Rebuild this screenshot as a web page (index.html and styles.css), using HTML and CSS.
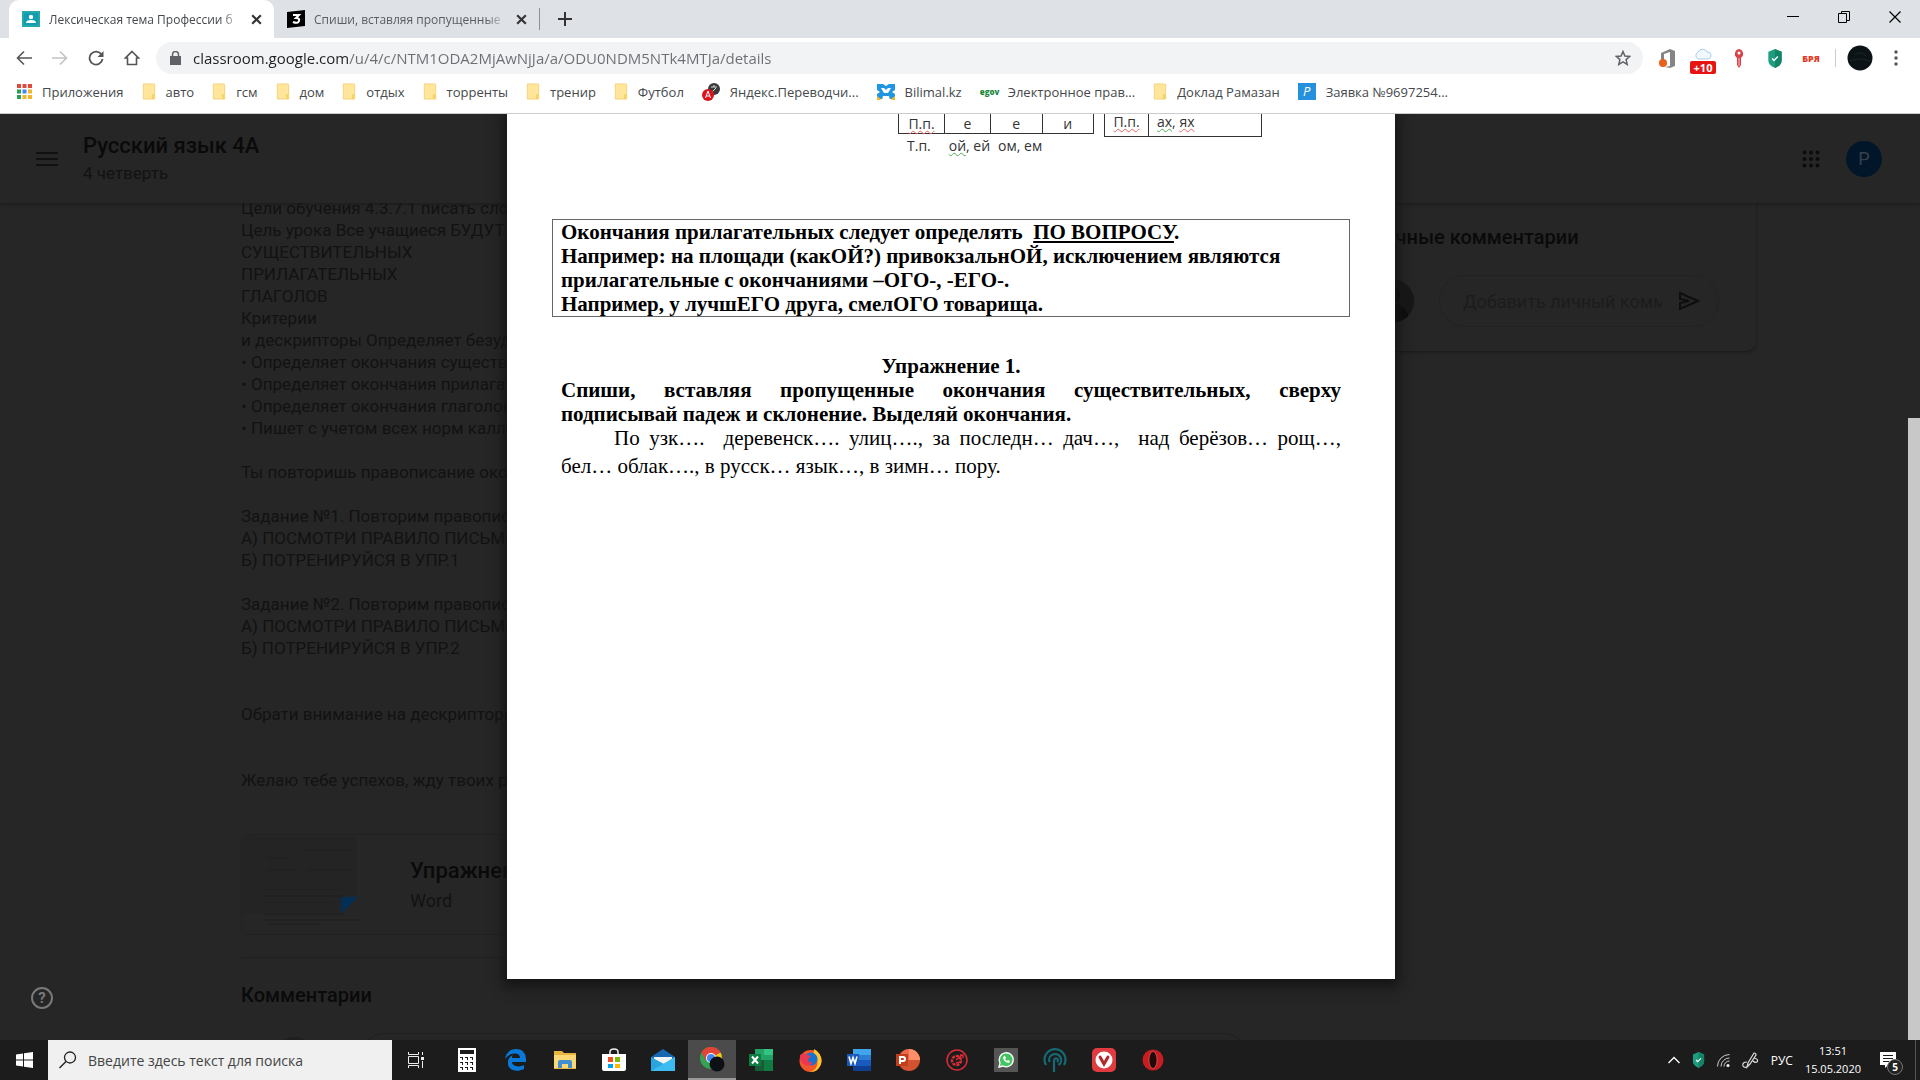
FILE: index.html
```html
<!DOCTYPE html>
<html lang="ru">
<head>
    <meta charset="UTF-8">
    <meta name="viewport" content="width=device-width, initial-scale=1.0">
    <title>Лексическая тема Профессии</title>
    <link rel="stylesheet" href="styles.css">
</head>
<body>
    <svg class="defs" width="0" height="0">
        <symbol id="folder" viewBox="0 0 14 18">
            <path d="M1 1h11a1 1 0 0 1 1 1v15H1z" fill="#ffe69a" stroke="#f2d27a"/>
            <path d="M10 17v-4q0-1 1-1h2v5z" fill="#f5d365"/>
        </symbol>
        <symbol id="shield" viewBox="0 0 16 20">
            <path d="M8 0l7 3v9q0 5-7 8-7-3-7-8V3z" fill="#1f9d80"/>
            <path d="M8 0l7 3v9q0 5-7 8z" fill="#148468"/>
            <path d="M5 10l2 2 4-4" fill="none" stroke="#fff" stroke-width="1.5"/>
        </symbol>
        <symbol id="close" viewBox="0 0 12 12">
            <path d="M2 2l8 8M10 2l-8 8" fill="none" stroke="currentColor" stroke-width="2"/>
        </symbol>
    </svg>

    <!-- browser tabs -->
    <div class="tabs">
        <div class="tab active">
            <svg width="18" height="16" viewBox="0 0 18 16"><path d="M0 0h18v16H0z" fill="#25a8a8"/><path d="M2 2h14v12H2z" fill="#129eaf"/><circle cx="9" cy="6" r="2.200" fill="#fff"/><path d="M4 12q0-3 5-3t5 3z" fill="#fff"/></svg>
            <span class="tab-title">Лексическая тема Профессии б</span>
            <button aria-label="Закрыть"><svg width="13" height="13"><use href="#close"/></svg></button>
        </div>
        <div class="tab">
            <svg width="18" height="18" viewBox="0 0 18 18"><path d="M0 2l18-2v16L0 18z" fill="#000"/><path d="M6 5h6l-3 3q4 0 3 3-1 3-6 1" fill="none" stroke="#fff" stroke-width="2"/></svg>
            <span class="tab-title">Спиши, вставляя пропущенные</span>
            <button aria-label="Закрыть"><svg width="13" height="13"><use href="#close"/></svg></button>
        </div>
        <button class="new-tab" aria-label="Новая вкладка"><svg width="14" height="14" viewBox="0 0 14 14"><path d="M7 0v14M0 7h14" stroke="#333" stroke-width="2"/></svg></button>
        <div class="window-buttons">
            <button aria-label="Свернуть"><svg width="12" height="14" viewBox="0 0 12 14"><path d="M0 6.500h12" stroke="#000"/></svg></button>
            <button aria-label="Развернуть"><svg width="12" height="12" viewBox="0 0 12 12"><path d="M.5 2.500h8v9h-8zM3.500 2V.5h8v9H9" fill="none" stroke="#000"/></svg></button>
            <button aria-label="Закрыть окно"><svg width="12" height="12" viewBox="0 0 12 12"><path d="M.5.5l11 11M11.500.5l-11 11" stroke="#000" stroke-width="1.200"/></svg></button>
        </div>
    </div>

    <!-- address bar -->
    <div class="toolbar">
        <button aria-label="Назад"><svg width="16" height="16" viewBox="0 0 16 16"><path d="M16 8H2M8 1.500L1.500 8 8 14.500" fill="none" stroke="#555" stroke-width="1.600"/></svg></button>
        <button aria-label="Вперёд"><svg width="16" height="16" viewBox="0 0 16 16"><path d="M0 8h14M8 1.500L14.500 8 8 14.500" fill="none" stroke="#c0c2c4" stroke-width="1.600"/></svg></button>
        <button aria-label="Обновить"><svg width="16" height="16" viewBox="0 0 16 16"><path d="M13.500 4.500A6.500 6.500 0 1 0 14.500 9" fill="none" stroke="#555" stroke-width="1.800"/><path d="M15.500 1v6h-6z" fill="#555"/></svg></button>
        <button aria-label="Домой"><svg width="16" height="16" viewBox="0 0 16 16"><path d="M8 1.500L14.500 8H12.500v6.500h-9V8h-2z" fill="none" stroke="#555" stroke-width="1.600"/></svg></button>
        <div class="address">
            <svg width="11" height="14" viewBox="0 0 11 14"><path d="M0 5h11v9H0z" fill="#5f6368"/><path d="M2.500 6V3.500a3 3 0 0 1 6 0V6" fill="none" stroke="#5f6368" stroke-width="1.500"/></svg>
            <input type="text" aria-label="Адрес" value="classroom.google.com/u/4/c/NTM1ODA2MjAwNjJa/a/ODU0NDM5NTk4MTJa/details">
            <button aria-label="Добавить в закладки"><svg width="16" height="16" viewBox="0 0 16 16"><path d="M8 1.500l1.900 4.500 4.800.4-3.600 3.200 1.100 4.800L8 11.900l-4.200 2.500 1.100-4.800L1.300 6.400 6.100 6z" fill="none" stroke="#5f6368" stroke-width="1.500"/></svg></button>
        </div>
        <div class="extensions">
            <button aria-label="Office"><svg width="18" height="19" viewBox="0 0 18 19"><path d="M3 4l9-4 5 2v15l-5 2-5-1 5-1V3L6 5v6H3z" fill="#858585"/><circle cx="5" cy="14" r="4" fill="#e8611a"/></svg></button>
            <button class="weather" aria-label="Погода"><svg width="20" height="12" viewBox="0 0 20 12"><path d="M5 11a4 4 0 0 1 0-7 5 5 0 0 1 9 0 3.500 3.500 0 0 1 1 7z" fill="#f2f9fe" stroke="#a8cde8"/></svg><span class="badge">+10</span></button>
            <button aria-label="Пароли"><svg width="12" height="19" viewBox="0 0 12 19"><path d="M6 0a5 5 0 0 1 2 9v7l-2 3-2-3V9a5 5 0 0 1 2-9z" fill="#d8424b"/><circle cx="6" cy="4" r="1.500" fill="#fff"/><path d="M6 9v8" stroke="#fbb"/></svg></button>
            <button aria-label="Защита"><svg width="16" height="19"><use href="#shield"/></svg></button>
            <button class="bra" aria-label="БРЯ">БРЯ</button>
            <span class="line"></span>
            <button aria-label="Профиль"><svg width="26" height="26" viewBox="0 0 26 26"><circle cx="13" cy="13" r="12.500" fill="#0c1317"/><path d="M3 16q10-4 20 0M7 10q6-5 12 1" stroke="#1b2429" fill="none"/></svg></button>
            <button aria-label="Меню"><svg width="4" height="16" viewBox="0 0 4 16" fill="#555"><circle cx="2" cy="2" r="1.700"/><circle cx="2" cy="8" r="1.700"/><circle cx="2" cy="14" r="1.700"/></svg></button>
        </div>
    </div>

    <!-- bookmarks -->
    <nav class="bookmarks">
        <a href="#"><svg width="15" height="15" viewBox="0 0 15 15"><path d="M0 0h4v4H0zM5.500 0h4v4h-4zM11 0h4v4h-4z" fill="#df4a3c"/><path d="M0 5.500h4v4H0z" fill="#2a9d57"/><path d="M5.500 5.500h4v4h-4z" fill="#4285f4"/><path d="M11 5.500h4v4h-4zM5.500 11h4v4h-4zM11 11h4v4h-4z" fill="#f2b42a"/><path d="M0 11h4v4H0z" fill="#2a9d57"/></svg>Приложения</a>
        <a href="#"><svg width="14" height="17"><use href="#folder"/></svg>авто</a>
        <a href="#"><svg width="14" height="17"><use href="#folder"/></svg>гсм</a>
        <a href="#"><svg width="14" height="17"><use href="#folder"/></svg>дом</a>
        <a href="#"><svg width="14" height="17"><use href="#folder"/></svg>отдых</a>
        <a href="#"><svg width="14" height="17"><use href="#folder"/></svg>торренты</a>
        <a href="#"><svg width="14" height="17"><use href="#folder"/></svg>тренир</a>
        <a href="#"><svg width="14" height="17"><use href="#folder"/></svg>Футбол</a>
        <a href="#"><svg width="18" height="18" viewBox="0 0 18 18"><circle cx="12" cy="6" r="6" fill="#3a3a3a"/><path d="M9 4h6M12 2v2M10 9l4-4" stroke="#ddd"/><circle cx="6" cy="12" r="6" fill="#d9141e"/><path d="M3.500 15L6 8l2.500 7M4.500 13h3" stroke="#fff" fill="none"/></svg>Яндекс.Переводчи...</a>
        <a href="#"><svg width="18" height="16" viewBox="0 0 18 16"><path d="M0 0h6l3 2 3-2h6v6l-3 2 3 2v5H0v-5l3-2-3-2z" fill="#2196e3"/><path d="M4 4h3l2 2 2-2h3l-3 5H7zM6 12h6l1 4H5z" fill="#fff"/><path d="M0 12l4 3-1 1H0zM18 12l-4 3 1 1h3z" fill="#f6b52a"/></svg>Bilimal.kz</a>
        <a href="#"><span class="egov">egov</span>Электронное прав...</a>
        <a href="#"><svg width="14" height="17"><use href="#folder"/></svg>Доклад Рамазан</a>
        <a href="#"><span class="p-icon">P</span>Заявка №9697254...</a>
    </nav>

    <!-- page under the viewer -->
    <div class="page">
        <header class="course">
            <button aria-label="Главное меню"><svg width="22" height="14" viewBox="0 0 22 14"><path d="M0 1h22M0 7h22M0 13h22" stroke="#111" stroke-width="2"/></svg></button>
            <div class="course-name">
                <h1>Русский язык 4А</h1>
                <p>4 четверть</p>
            </div>
            <button class="apps" aria-label="Приложения Google"><svg width="18" height="18" viewBox="0 0 18 18" fill="#0c0c0c"><circle cx="2.500" cy="2.500" r="2"/><circle cx="9" cy="2.500" r="2"/><circle cx="15.500" cy="2.500" r="2"/><circle cx="2.500" cy="9" r="2"/><circle cx="9" cy="9" r="2"/><circle cx="15.500" cy="9" r="2"/><circle cx="2.500" cy="15.500" r="2"/><circle cx="9" cy="15.500" r="2"/><circle cx="15.500" cy="15.500" r="2"/></svg></button>
            <button class="account" aria-label="Аккаунт">P</button>
        </header>

        <div class="content">
            <main class="task">
                <p class="description">Цели обучения 4.3.7.1 писать слова
Цель урока Все учащиеся БУДУТ
СУЩЕСТВИТЕЛЬНЫХ
ПРИЛАГАТЕЛЬНЫХ
ГЛАГОЛОВ
Критерии
и дескрипторы Определяет безударные
• Определяет окончания существительных
• Определяет окончания прилагательных
• Определяет окончания глаголов
• Пишет с учетом всех норм каллиграфии

Ты повторишь правописание окончаний

Задание №1. Повторим правописание
А) ПОСМОТРИ ПРАВИЛО ПИСЬМА
Б) ПОТРЕНИРУЙСЯ В УПР.1

Задание №2. Повторим правописание
А) ПОСМОТРИ ПРАВИЛО ПИСЬМА
Б) ПОТРЕНИРУЙСЯ В УПР.2


Обрати внимание на дескрипторы


Желаю тебе успехов, жду твоих работ</p>
                <a class="attachment" href="#">
                    <svg width="127" height="98" viewBox="0 0 127 98">
                        <path d="M0 0h116v61l-17 17H0z" fill="#242424"/>
                        <path d="M116 0v61" stroke="#2b2b2b"/>
                        <path d="M26 22h20M64 14h46M26 34h30M66 34h42M22 54h80M22 60h78M22 66h70M22 78h80M22 84h100M28 88h50" stroke="#1e1e1e"/>
                        <path d="M99 61h17L99 78z" fill="#032f55"/>
                    </svg>
                    <span>
                        <strong>Упражнение</strong>
                        <small>Word</small>
                    </span>
                </a>
                <h2>Комментарии</h2>
                <div class="comment"><span class="avatar"></span><span class="comment-line"></span></div>
            </main>

            <aside class="private">
                <h2>Личные комментарии</h2>
                <div class="private-row">
                    <svg width="44" height="44" viewBox="0 0 44 44"><circle cx="22" cy="22" r="22" fill="#171717"/><circle cx="22" cy="16" r="8" fill="#0c0c0c"/><path d="M6 37q2-12 16-12t16 12q-16 14-32 0" fill="#0c0c0c"/></svg>
                    <div class="pill">
                        <input type="text" aria-label="Личный комментарий" placeholder="Добавить личный комментарий">
                        <button aria-label="Отправить"><svg width="22" height="20" viewBox="0 0 22 20"><path d="M2 2l18 8-18 8v-6l9-2-9-2z" fill="none" stroke="#0e0e0e" stroke-width="2"/></svg></button>
                    </div>
                </div>
            </aside>
        </div>

        <button class="help" aria-label="Справка">?</button>

        <!-- document viewer -->
        <article class="document">
            <div class="endings">
                <div>
                    <table class="single">
                        <tr><td><span class="red">П.п.</span></td><td>е</td><td>е</td><td>и</td></tr>
                    </table>
                    <p class="instrumental"><span>Т.п.</span><span><span class="green">ой</span>, ей</span><span>ом, ем</span></p>
                </div>
                <table class="plural">
                    <tr><td><span class="red">П.п.</span></td><td><span class="green">ах</span>, <span class="red">ях</span></td></tr>
                </table>
            </div>
            <div class="rule">
                Окончания прилагательных следует определять&nbsp; <u>ПО ВОПРОСУ</u>.<br>
                Например: на площади (какОЙ?) привокзальнОЙ, исключением являются<br>
                прилагательные с окончаниями –ОГО-, -ЕГО-.<br>
                Например, у лучшЕГО друга, смелОГО товарища.
            </div>
            <div class="exercise">
                <h3>Упражнение 1.</h3>
                <p class="instruction">Спиши, вставляя пропущенные окончания существительных, сверху подписывай&nbsp;падеж и склонение. Выделяй окончания.</p>
                <p class="words">По узк…. &nbsp;деревенск…. улиц…., за последн… дач…, &nbsp;над берёзов… рощ…, бел…&nbsp;облак…., в русск… язык…, в зимн… пору.</p>
            </div>
        </article>
        <div class="scrollbar"></div>
    </div>

    <!-- windows taskbar -->
    <footer class="taskbar">
        <button class="start" aria-label="Пуск"><svg width="17" height="16" viewBox="0 0 17 16" fill="#fff"><path d="M0 2.500L7 1.500V7.500H0zM8 1.300L17 0v7.500H8zM0 8.500h7v6l-7-1zM8 8.500h9V16l-9-1.300z"/></svg></button>
        <label class="search">
            <svg width="18" height="18" viewBox="0 0 18 18"><circle cx="11" cy="6.500" r="5.500" fill="none" stroke="#222" stroke-width="1.300"/><path d="M7 10.500L.5 17" stroke="#222" stroke-width="1.500"/></svg>
            <input type="text" aria-label="Поиск" placeholder="Введите здесь текст для поиска">
        </label>
        <div class="task-icons">
            <button aria-label="Представление задач"><svg width="16" height="16" viewBox="0 0 16 16" fill="none" stroke="#eee"><path d="M.5 0v2.500h10V0M.5 16v-2.500h10V16M.5 4.500h10v7H.5zM14.500 0v3M14.500 9v7"/><path d="M13 5h3v3h-3z" fill="#eee" stroke="none"/></svg></button>
            <button aria-label="Калькулятор"><svg width="18" height="24" viewBox="0 0 18 24"><path d="M0 0h18v24H0z" fill="#fff"/><path d="M2 2h14v4H2zM2 9h3v3H2zM7 9h3v3H7zM12 9h3v3h-3zM2 14h3v3H2zM7 14h3v3H7zM12 14h3v3h-3zM2 19h3v3H2zM7 19h3v3H7zM12 19h3v3h-3z" fill="#1c1c1c"/><path d="M2 10h2v2H2zM7 10h2v2H7zM12 10h2v2h-2zM2 15h2v2H2zM7 15h2v2H7zM12 15h2v2h-2zM2 20h2v2H2zM7 20h2v2H7zM12 20h2v2h-2z" fill="#fff"/></svg></button>
            <button aria-label="Edge"><svg width="22" height="22" viewBox="0 0 22 22"><path d="M0 10C1 3 6 0 11 0c7 0 10 5 10 10v3H7c0 4 7 6 12 3v4C11 24 2 21 3 13c0-4 3-6 5-7-1 1-1 2-1 3h8c0-6-10-6-15 1z" fill="#0a78d6"/></svg></button>
            <button aria-label="Проводник"><svg width="22" height="20" viewBox="0 0 22 20"><path d="M0 1h8l2 2h12v16H0z" fill="#e8b43e"/><path d="M0 5h22v13H0z" fill="#fbd775"/><path d="M4 18v-6q0-2 2-2h10q2 0 2 2v6h-4v-4H8v4z" fill="#3f8fd0"/></svg></button>
            <button aria-label="Магазин"><svg width="24" height="24" viewBox="0 0 24 24"><path d="M8 6V4q0-3 4-3t4 3v2" fill="none" stroke="#eee" stroke-width="1.500"/><path d="M0 6h24v15q0 2-2 2H2q-2 0-2-2z" fill="#fff"/><path d="M6 9h5v5H6z" fill="#f04e23"/><path d="M13 9h5v5h-5z" fill="#7fb900"/><path d="M6 16h5v4H6z" fill="#00a3ee"/><path d="M13 16h5v4h-5z" fill="#ffb800"/></svg></button>
            <button aria-label="Почта"><svg width="24" height="22" viewBox="0 0 24 22"><path d="M0 8l12-8 12 8v4H0z" fill="#1768b3"/><path d="M3 8h18v8H3z" fill="#f4f4f4"/><path d="M0 8l13 7 11-7v14H0z" fill="#2aa5e0"/><path d="M24 8v14H0z" fill="#3dbcf0"/></svg></button>
            <button class="current" aria-label="Chrome"><svg width="25" height="25" viewBox="0 0 25 25"><circle cx="11" cy="11" r="11" fill="#34a353"/><path d="M1.500 5.500A11 11 0 0 1 20.500 5.500L11 11z" fill="#e24436"/><path d="M20.500 5.500A11 11 0 0 1 11 22V11z" fill="#fbc417"/><path d="M1.500 5.500A11 11 0 0 1 20.500 6H11l-5 8z" fill="#e24436"/><circle cx="11" cy="11" r="5" fill="#fff"/><circle cx="11" cy="11" r="4" fill="#4285f4"/><circle cx="17" cy="17" r="7.500" fill="#0d1115"/></svg></button>
            <button aria-label="Excel"><svg width="24" height="22" viewBox="0 0 24 22"><path d="M6 0h9v11H6z" fill="#21a366"/><path d="M15 0h9v6h-9z" fill="#33c481"/><path d="M15 6h9v5h-9z" fill="#21a366"/><path d="M6 11h9v11H6z" fill="#185c37"/><path d="M15 11h9v11h-9z" fill="#107c41"/><path d="M0 5h12v12H0z" fill="#107c41"/><path d="M3 7.500l6 7M9 7.500l-6 7" stroke="#fff" stroke-width="2"/></svg></button>
            <button aria-label="Firefox"><svg width="23" height="23" viewBox="0 0 23 23"><circle cx="11.500" cy="12" r="11" fill="#f4562c"/><path d="M15 0q8 4 7.500 13-2 10-12 10 8-2 8-10 0-5-4-8z" fill="#ffc62b"/><circle cx="12" cy="10" r="6.500" fill="#1a72d0"/><path d="M1 6q4-3 7 0l4 1-3 3q0 4 5 3-3 5-8 3-6-3-5-10z" fill="#ec3750"/></svg></button>
            <button aria-label="Word"><svg width="24" height="22" viewBox="0 0 24 22"><path d="M6 0h18v6H6z" fill="#41a5ee"/><path d="M6 6h18v5H6z" fill="#2b7cd3"/><path d="M6 11h18v6H6z" fill="#185abd"/><path d="M6 17h18v5H6z" fill="#103f91"/><path d="M0 5h12v12H0z" fill="#185abd"/><path d="M2 7.500l2 7 2-6 2 6 2-7" stroke="#fff" stroke-width="1.600" fill="none"/></svg></button>
            <button aria-label="PowerPoint"><svg width="24" height="22" viewBox="0 0 24 22"><circle cx="13" cy="11" r="11" fill="#d35230"/><path d="M13 0a11 11 0 0 1 11 11H13z" fill="#ff8f6b"/><path d="M13 0v11H3A11 11 0 0 1 13 0z" fill="#ed6c47"/><path d="M0 5h12v12H0z" fill="#c43e1c"/><path d="M4 15V8h3q2 0 2 2t-2 2H4" stroke="#fff" stroke-width="2" fill="none"/></svg></button>
            <button aria-label="Настройка"><svg width="22" height="22" viewBox="0 0 22 22" fill="none" stroke="#d92c38"><circle cx="11" cy="11" r="10" stroke-width="1.500"/><circle cx="10.500" cy="11.500" r="4.500" stroke-width="2.500" stroke-dasharray="3 1"/><path d="M10 11l6-5M14 6h3v3M10 14l5-1" stroke-width="1.500"/></svg></button>
            <button aria-label="WhatsApp"><svg width="24" height="24" viewBox="0 0 24 24"><path d="M0 0h24v24H0z" fill="#555"/><path d="M5 19l1-4a7 7 0 1 1 3 3z" fill="#45c464" stroke="#fff" stroke-width="1.300"/><path d="M9 9q0 5 6 6l1-2-2-1-1 1-2-2 1-1-1-2z" fill="#fff"/></svg></button>
            <button aria-label="Подкасты"><svg width="24" height="24" viewBox="0 0 24 24" fill="none" stroke="#156a75" stroke-width="2.200"><path d="M3 17a10.500 10.500 0 1 1 18 0"/><path d="M6.500 14a6 6 0 1 1 9 3"/><path d="M11 24V12a2 2 0 1 1 3 2"/></svg></button>
            <button aria-label="Vivaldi"><svg width="24" height="24" viewBox="0 0 24 24"><rect width="24" height="24" rx="5" fill="#df3b40"/><circle cx="12" cy="12" r="8.500" fill="#fff"/><path d="M8 9l4 7 4-7" stroke="#b3262c" stroke-width="3" fill="none" stroke-linecap="round"/></svg></button>
            <button aria-label="Opera"><svg width="22" height="22" viewBox="0 0 22 22"><circle cx="11" cy="11" r="10.500" fill="#c81d20"/><ellipse cx="11" cy="11" rx="4" ry="8.500" fill="#240808" stroke="#e88" stroke-width=".5"/></svg></button>
        </div>
        <div class="tray">
            <svg width="12" height="8" viewBox="0 0 12 8"><path d="M.5 7L6 1.500 11.500 7" fill="none" stroke="#fff" stroke-width="1.300"/></svg>
            <svg width="13" height="16"><use href="#shield"/></svg>
            <svg width="13" height="13" viewBox="0 0 13 13" fill="none" stroke="#ccc"><path d="M.5 12.500a12 12 0 0 1 12-12M4 12.500A8.500 8.500 0 0 1 12.500 4M7 12.500A5.500 5.500 0 0 1 12.500 7"/><circle cx="11" cy="11.500" r="1.500" fill="#fff" stroke="none"/></svg>
            <svg width="17" height="17" viewBox="0 0 17 17" fill="none" stroke="#ddd" stroke-width="1.200"><path d="M5 15l1-4 6-10q2 0 2 2L8 12zM5 10q-5 0-4 4 1 2 4 1M12 6q5 1 3 4-2 1-4-1"/></svg>
            <span class="lang">РУС</span>
            <time>13:51<br>15.05.2020</time>
            <button class="notify" aria-label="Уведомления"><svg width="16" height="17" viewBox="0 0 16 17"><path d="M0 0h16v13H8l-3 3v-3H0z" fill="#fff"/><path d="M3 3.500h10M3 6.500h10M3 9.500h6" stroke="#1c1c1c"/></svg><span>5</span></button>
        </div>
    </footer>
</body>
</html>
```
FILE: styles.css
```css
* {
    box-sizing: border-box;
}
body {
    display: flex;
    flex-direction: column;
    height: 100vh;
    margin: 0;
    overflow: hidden;
    background: #fff;
    font-family: "Open Sans", "Noto Sans", sans-serif;
    font-size: 13px;
}
h1, h2, h3, p {
    margin: 0;
}
button {
    display: flex;
    align-items: center;
    justify-content: center;
    padding: 0;
    border: none;
    background: none;
    font-family: inherit;
}
input {
    min-width: 0;
    padding: 0;
    border: none;
    outline: none;
    background: none;
    font-family: inherit;
}
svg {
    flex: none;
}
.defs {
    position: absolute;
}

/* tabs */
.tabs {
    display: flex;
    flex: none;
    height: 38px;
    background: #dee1e6;
}
.tab {
    display: flex;
    align-items: center;
    width: 265px;
    padding: 0 11px 0 13px;
    color: #5a5d61;
}
.tab.active {
    margin-left: 9px;
    border-radius: 10px 10px 0 0;
    background: #fff;
    color: #45484c;
}
.tab-title {
    flex: 1;
    margin: 0 9px;
    font-size: 12px;
    white-space: nowrap;
    mask-image: linear-gradient(to right, #000 90%, transparent);
}
.tab button {
    color: #333;
}
.new-tab {
    width: 50px;
    height: 22px;
    margin-top: 8px;
    border-left: 1px solid #8d9094;
}
.window-buttons {
    display: flex;
    height: 34px;
    margin-left: auto;
}
.window-buttons button {
    width: 51px;
}

/* address bar */
.toolbar {
    display: flex;
    flex: none;
    align-items: center;
    height: 40px;
    padding-left: 6px;
}
.toolbar > button {
    width: 36px;
}
.address {
    display: flex;
    flex: 1;
    align-items: center;
    gap: 12px;
    height: 32px;
    margin-left: 6px;
    padding: 0 12px 0 14px;
    border-radius: 16px;
    background: #f1f3f4;
}
.address input {
    flex: 1;
    background: linear-gradient(to right, #202124 155px, #6b6e72 155px);
    background-clip: text;
    -webkit-text-fill-color: transparent;
    font-size: 15px;
}
.extensions {
    display: flex;
    align-items: center;
    width: 277px;
    padding-left: 6px;
}
.extensions button {
    width: 36px;
}
.weather {
    position: relative;
    height: 32px;
    padding-bottom: 8px;
}
.badge {
    position: absolute;
    bottom: 0;
    left: 5px;
    width: 26px;
    border-radius: 2px;
    background: #e81414;
    color: #fff;
    font-size: 11px;
    font-weight: bold;
    line-height: 13px;
}
.bra {
    color: #e5391f;
    font-size: 9px;
    font-weight: 800;
}
.line {
    width: 1px;
    height: 18px;
    margin: 0 6px;
    background: #ccc;
}

/* bookmarks */
.bookmarks {
    display: flex;
    flex: none;
    align-items: center;
    gap: 18px;
    height: 36px;
    padding: 0 0 8px 17px;
    border-bottom: 1px solid #ccc;
    white-space: nowrap;
}
.bookmarks a {
    display: flex;
    align-items: center;
    gap: 10px;
    color: #45484c;
    text-decoration: none;
}
.egov {
    width: 18px;
    color: #1c8a3e;
    font-size: 8px;
    font-weight: 800;
}
.p-icon {
    width: 18px;
    background: #2590dc;
    color: #fff;
    font-style: italic;
    line-height: 17px;
    text-align: center;
}

/* page */
.page {
    position: relative;
    flex: 1;
    min-height: 0;
    overflow: hidden;
    background: #262626;
    color: #121212;
    font-family: Roboto, sans-serif;
    font-size: 17px;
}
.course {
    display: flex;
    position: relative;
    align-items: center;
    height: 89px;
    padding: 0 38px 0 36px;
    background: #262626;
    box-shadow: 0 1px 3px #1a1a1a;
}
.course-name {
    margin-left: 25px;
}
.course h1 {
    font-size: 22px;
    font-weight: 500;
    line-height: 28px;
    color: #0a0a0a;
}
.course p {
    line-height: 26px;
}
.apps {
    margin-left: auto;
}
.account {
    width: 36px;
    height: 36px;
    margin-left: 26px;
    border-radius: 50%;
    background: #021629;
    color: #36414c;
    font-size: 18px;
}
.content {
    display: flex;
    justify-content: space-between;
    padding: 0 164px 0 241px;
}
.task {
    width: 1008px;
}
.description {
    margin-top: -6px;
    line-height: 22px;
    white-space: pre-wrap;
}
.attachment {
    display: flex;
    align-items: center;
    gap: 41px;
    height: 101px;
    margin-top: 43px;
    border: 1px solid #212121;
    border-radius: 10px;
    color: #121212;
    text-decoration: none;
}
.attachment strong, .attachment small {
    display: block;
    font-size: 22px;
    font-weight: 500;
    line-height: 32px;
    color: #0a0a0a;
}
.attachment small {
    font-size: 18px;
    font-weight: 400;
    line-height: 28px;
    color: #121212;
}
.task h2, .private h2 {
    color: #0a0a0a;
    font-size: 20px;
    font-weight: 500;
    line-height: 24px;
}
.task h2 {
    margin-top: 22px;
    padding-top: 25px;
    border-top: 1px solid #202020;
}
.comment {
    display: flex;
    gap: 42px;
    margin-top: 26px;
    padding-left: 32px;
}
.avatar {
    width: 44px;
    height: 44px;
    margin-top: 4px;
    border-radius: 50%;
    background: #1f1f1f;
}
.comment-line {
    flex: 1;
    height: 52px;
    border: 1px solid #202020;
    border-radius: 26px;
}
.private {
    height: 148px;
    padding: 22px 37px 0 24px;
    border-radius: 0 0 10px 10px;
    box-shadow: 0 1px 3px #181818;
}
.private-row {
    display: flex;
    align-items: center;
    gap: 25px;
    margin-top: 26px;
}
.pill {
    display: flex;
    align-items: center;
    gap: 16px;
    width: 280px;
    height: 52px;
    padding: 0 18px 0 23px;
    border: 1px solid #222;
    border-radius: 26px;
}
.pill input {
    flex: 1;
    font-size: 18px;
}
.pill input::placeholder {
    color: #1c1c1c;
}
.help {
    position: absolute;
    bottom: 31px;
    left: 31px;
    width: 22px;
    height: 22px;
    border: 2px solid #77797b;
    border-radius: 50%;
    color: #77797b;
    font-size: 15px;
    font-weight: bold;
}
.scrollbar {
    position: absolute;
    top: 304px;
    right: 0;
    bottom: 0;
    width: 12px;
    background: #c8c8c8;
}

/* document */
.document {
    position: absolute;
    top: 0;
    bottom: 61px;
    left: 507px;
    right: 525px;
    padding: 0 45px;
    background: #fff;
    box-shadow: 0 4px 12px 4px #151515;
    color: #000;
    font-family: "Liberation Serif", serif;
    font-size: 21px;
    line-height: 24px;
}
.endings {
    display: flex;
    justify-content: flex-end;
    align-items: flex-start;
    gap: 10px;
    height: 105px;
    padding-right: 88px;
    color: #333;
    font-family: "Open Sans", sans-serif;
    font-size: 14px;
    line-height: 19px;
}
table {
    border: 1px solid #333;
    border-top: none;
    border-collapse: collapse;
    table-layout: fixed;
}
td {
    padding: 0;
    border-left: 1px solid #333;
    text-align: center;
}
.single {
    width: 196px;
}
.single td:nth-child(-n+2) {
    width: 46px;
}
.plural {
    width: 158px;
}
.plural td {
    padding-bottom: 7px;
    line-height: 15px;
}
.plural td:first-child {
    width: 44px;
}
.plural td:last-child {
    padding-left: 8px;
    text-align: left;
}
.red, .green {
    text-decoration: underline wavy #e66 1px;
}
.green {
    text-decoration-color: #5a5;
}
.instrumental {
    display: flex;
    gap: 8px;
    padding: 2px 0 0 9px;
}
.instrumental > span:first-child {
    margin-right: 10px;
}
.rule {
    padding: 0 8px;
    border: 1px solid #666;
    font-weight: bold;
}
.exercise {
    padding: 37px 9px 0;
}
.exercise h3 {
    font-size: 21px;
    text-align: center;
}
.instruction, .words {
    text-align: justify;
}
.instruction {
    font-weight: bold;
}
.words {
    margin-top: -2px;
    line-height: 28px;
    text-indent: 53px;
}

/* taskbar */
.taskbar {
    display: flex;
    flex: none;
    align-items: center;
    height: 40px;
    background: #1c1c1c;
    color: #fff;
}
.start {
    width: 48px;
}
.search {
    display: flex;
    align-items: center;
    gap: 11px;
    width: 344px;
    height: 40px;
    padding: 0 11px;
    background: #f0f0f0;
}
.search input {
    flex: 1;
    font-size: 14px;
}
.search input::placeholder {
    color: #444;
}
.task-icons {
    display: flex;
    gap: 1px;
}
.task-icons button {
    width: 48px;
    height: 40px;
}
.task-icons button:first-child {
    margin-right: 2px;
}
.task-icons .current {
    border-bottom: 2px solid #999;
    background: #4b4b4b;
}
.tray {
    display: flex;
    align-items: center;
    gap: 12px;
    height: 40px;
    margin: 0 4px 0 auto;
    border-right: 1px solid #555;
}
.lang {
    font-size: 12px;
}
.tray time {
    font-size: 11px;
    line-height: 18px;
    text-align: center;
}
.notify {
    position: relative;
    width: 54px;
    height: 40px;
    margin-left: -12px;
}
.notify span {
    position: absolute;
    top: 19px;
    left: 26px;
    width: 16px;
    height: 16px;
    border: 1px solid #777;
    border-radius: 50%;
    background: #222;
    color: #fff;
    font-size: 10px;
    font-weight: bold;
    line-height: 14px;
}
```
